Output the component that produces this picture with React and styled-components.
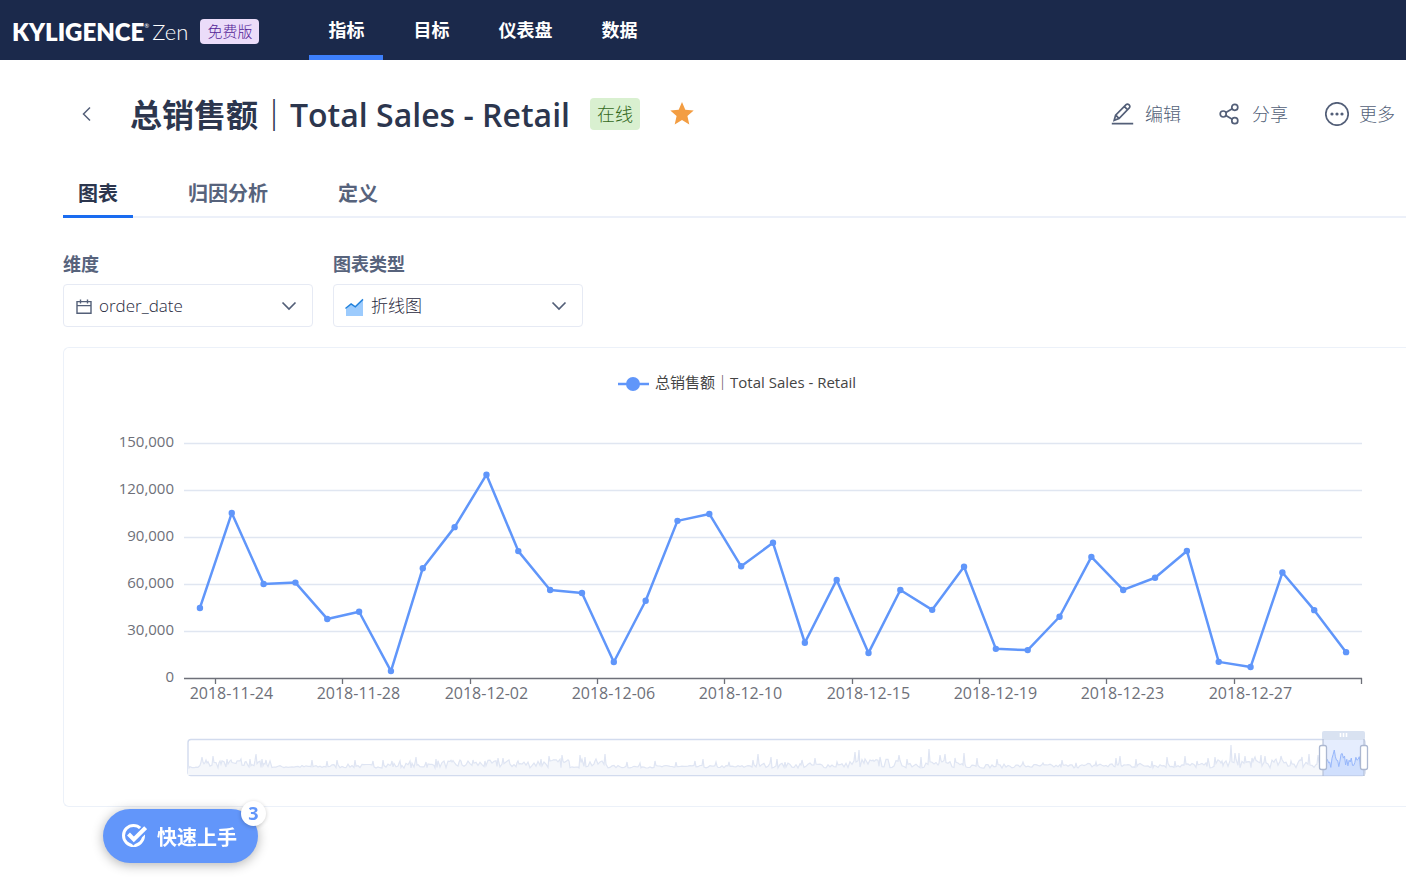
import React, { useLayoutEffect, useRef, useState } from 'react'
import styled, { createGlobalStyle } from 'styled-components'

const METRIC = '总销售额｜Total Sales - Retail';

const navItems = ['指标', '目标', '仪表盘', '数据'];
const tabItems = ['图表', '归因分析', '定义'];

const sales = [
  44700, 105300, 60000, 60900, 37700, 42300, 4400, 70100, 96300, 129800,
  81000, 56200, 54300, 10200, 49300, 100300, 104700, 71300, 86300, 22500,
  62600, 16000, 56200, 43500, 71000, 18600, 17800, 39100, 77300, 56200,
  64000, 81100, 10300, 7000, 67300, 43300, 16500
];

const dateLabels = [
  '2018-11-24', '2018-11-28', '2018-12-02', '2018-12-06', '2018-12-10',
  '2018-12-15', '2018-12-19', '2018-12-23', '2018-12-27'
];

const yLabels = [150000, 120000, 90000, 60000, 30000, 0];

// [day, height] of the busy days in the whole history
const peaks = [
  [0, 5], [14, 11], [18, 8], [25, 12], [32, 7], [39, 9], [43, 8], [49, 7], [53, 9], [57, 6], [62, 9], [68, 14],
  [74, 9], [78, 8], [124, 8], [139, 7], [149, 8], [167, 8], [185, 7], [195, 8], [204, 7],
  [212, 7], [222, 7], [228, 11], [238, 6], [248, 9], [264, 6], [272, 8], [285, 8], [297, 7],
  [310, 10], [315, 10], [321, 8], [330, 7], [353, 9], [361, 12], [367, 8], [374, 13],
  [381, 7], [392, 13], [397, 11], [407, 7], [417, 14], [439, 6], [452, 5], [467, 7], [488, 6],
  [507, 7], [515, 9], [528, 6], [541, 6], [565, 8], [570, 14], [583, 11], [589, 9],
  [597, 6], [614, 8], [627, 10], [649, 6], [667, 16], [671, 18], [677, 9], [685, 8], [692, 11],
  [711, 13], [719, 9], [733, 11], [741, 19], [752, 13], [757, 14], [767, 10], [776, 15],
  [789, 10], [809, 9], [835, 6], [855, 5], [874, 8], [888, 5], [908, 6], [928, 10], [932, 12],
  [948, 9], [964, 7], [979, 11], [987, 7], [997, 12], [1009, 7], [1020, 10], [1027, 11],
  [1034, 7], [1043, 23], [1047, 15], [1051, 15], [1057, 12], [1064, 10], [1067, 11],
  [1073, 13], [1077, 12], [1087, 8], [1093, 12], [1103, 7], [1112, 8], [1114, 11],
  [1121, 14], [1130, 13]
];

// [from day, usual height]
const levels = [
  [0, 1], [12, 6], [85, 2], [140, 3], [200, 4], [250, 6], [345, 7], [420, 2],
  [560, 4], [660, 7], [705, 6], [790, 3], [900, 4], [1030, 7]
];

const DAYS = 1177;
const SELECTED_FROM = 1136;

const buildHistory = () => {
  let seed = 7;
  const random = () => {
    seed = (seed * 16807) % 2147483647;
    return seed / 2147483647;
  }
  const peakMap = new Map(peaks);
  const history = [];

  for (let day = 0; day < SELECTED_FROM; day++) {
    const level = levels.filter(([from]) => from <= day).pop()[1];
    if (peakMap.has(day))
      history.push([day, peakMap.get(day)]);
    else if (day % 2 === 0 || peakMap.has(day + 1) || peakMap.has(day - 1))
      history.push([day, random() * level * 1.3]);
  }
  sales.forEach((value, i) => {
    history.push([SELECTED_FROM + (i * (DAYS - SELECTED_FROM)) / (sales.length - 1), value / 7200]);
  })
  return history;
}

const history = buildHistory();

const SalesChart = () => {
  const wrapRef = useRef(null);
  const [width, setWidth] = useState(1342);

  useLayoutEffect(() => {
    const update = () => setWidth(wrapRef.current.clientWidth);
    const observer = new ResizeObserver(update);
    update();
    observer.observe(wrapRef.current);
    return () => observer.disconnect();
  }, [])

  const left = 120;
  const right = width - 44;
  const bottom = 330;
  const band = (right - left) / sales.length;
  const yOf = (value) => bottom - (value / 150000) * 235;
  const points = sales.map((value, i) => [left + band * (i + 0.5), yOf(value)]);
  const middle = (left + right) / 2;

  const sliderLeft = left + 4;
  const sliderRight = right + 3;
  const sliderX = (day) => sliderLeft + (day / DAYS) * (sliderRight - sliderLeft);
  const toLine = (list) => list.map(([day, h]) => `${sliderX(day).toFixed(1)},${(420 - h).toFixed(1)}`).join(' ');
  const picked = history.filter(([day]) => day >= SELECTED_FROM);
  const from = sliderX(SELECTED_FROM) - 1;
  const to = sliderRight - 1;

  return (
    <ChartWrap ref={wrapRef}>
      <ChartSvg role="img" aria-label={METRIC}>
        <g>
          <line x1={middle - 155} x2={middle - 124} y1="36" y2="36" stroke="#6096fa" strokeWidth="2.5" />
          <circle cx={middle - 140} cy="36" r="7" fill="#6096fa" />
          <LegendText x={middle - 118} y="40">{METRIC}</LegendText>
        </g>

        {yLabels.map(value => (
          <g key={value}>
            {value > 0 && <line x1={left} x2={right} y1={Math.round(yOf(value)) + 0.5} y2={Math.round(yOf(value)) + 0.5} stroke="#e0e6f1" strokeWidth="1.3" />}
            <AxisText x={left - 10} y={yOf(value) + 4} textAnchor="end">{value.toLocaleString('en-US')}</AxisText>
          </g>
        ))}

        <path d={`M${left} ${bottom + 0.5}H${right}`} stroke="#6e7079" strokeWidth="1.3" />
        {[...dateLabels, ''].map((label, i) => {
          const x = Math.round(left + band * (1 + i * 4)) - 0.5;
          return (
            <g key={i}>
              <line x1={x} x2={x} y1={bottom} y2={bottom + 6} stroke="#6e7079" strokeWidth="1.3" />
              <DateText x={x + band / 2} y={bottom + 21} textAnchor="middle">{label}</DateText>
            </g>
          )
        })}

        <polyline points={points.map(p => p.join(',')).join(' ')} fill="none" stroke="#6096fa" strokeWidth="2.5" strokeLinejoin="bevel" />
        {points.map(([x, y]) => <circle key={x} cx={x} cy={y} r="3.2" fill="#6096fa" />)}

        <rect x={sliderLeft} y="391.5" width={sliderRight - sliderLeft} height="36" rx="3" fill="#fff" stroke="#d2dbee" strokeWidth="1.4" />
        <polygon points={`${sliderX(0)},427 ${toLine(history)} ${sliderRight},427`} fill="#f5f7fb" />
        <polyline points={toLine(history)} fill="none" stroke="#dfe5f3" strokeWidth="1.2" />
        <rect x={from} y="391" width={to - from} height="37" fill="#e5edfe" />
        <polygon points={`${from},428 ${toLine(picked)} ${to},428`} fill="#d0dffd" />
        <polyline points={toLine(picked)} fill="none" stroke="#97b7fb" />
        <path d={`M${from} 391.5H${to}M${from} 427.5H${to}`} stroke="#c3d1ee" />
        <rect x={from - 1} y="383" width={to - from + 2} height="9" rx="2" fill="#d9e2f1" />
        <path d={`M${(from + to) / 2 - 3} 385v4m3 -4v4m3 -4v4`} stroke="#fff" strokeWidth="1.6" />
        {[from, to].map(x => (
          <g key={x}>
            <line x1={x} x2={x} y1="391" y2="428" stroke="#acb8d1" />
            <rect x={x - 3.5} y="397.5" width="7" height="24" rx="2" fill="#fff" stroke="#acb8d1" strokeWidth="1.3" />
          </g>
        ))}
      </ChartSvg>
    </ChartWrap>
  )
}

const EditIcon = () => (
  <Icon viewBox="0 0 24 24" $size={24}>
    <path d="M3.2 18.3l1.4-5.1L15.1 2.7a1.9 1.9 0 0 1 2.7 0l.5.5a1.9 1.9 0 0 1 0 2.7L8 16.5 3.2 18.3zM4.8 13.2l3.1 3.1M13.5 4.6l3.2 3.2M.8 21.6h21.4" />
  </Icon>
)

const ShareIcon = () => (
  <Icon viewBox="0 0 24 24" $size={24}>
    <circle cx="5.2" cy="12" r="3" />
    <circle cx="16.8" cy="5.3" r="3" />
    <circle cx="16.8" cy="18.7" r="3" />
    <path d="M7.9 10.6l6.3-3.8M7.9 13.4l6.3 3.8" />
  </Icon>
)

const MoreIcon = () => (
  <Icon viewBox="0 0 24 24" $size={24}>
    <circle cx="12" cy="12" r="11.2" />
    <g fill="currentColor" stroke="none">
      <circle cx="7" cy="12" r="1.6" />
      <circle cx="12" cy="12" r="1.6" />
      <circle cx="17" cy="12" r="1.6" />
    </g>
  </Icon>
)

const CalendarIcon = () => (
  <Icon viewBox="0 0 18 18" $size={18}>
    <path d="M2 4.6h14v11.7H2zM2 8.6h14M5.5 2.6v4M12.5 2.6v4" strokeWidth="1.4" />
  </Icon>
)

const AreaIcon = () => (
  <Icon viewBox="0 0 20 20" $size={20}>
    <path d="M1 13L6.5 8l4 3 7.5-6.5V20H1z" fill="#9ccbfd" stroke="none" />
    <path d="M.5 12.5l5.6-4.6 4.2 3L18 3.4" stroke="#1f80dc" strokeWidth="1.5" />
  </Icon>
)

const ChevronIcon = () => (
  <Icon viewBox="0 0 18 18" $size={18}>
    <path d="M2.5 5.5L9 12l6.5-6.5" />
  </Icon>
)

const CheckIcon = () => (
  <Icon viewBox="0 0 26 26" $size={26}>
    <circle cx="12.5" cy="12.5" r="10" stroke="#fff" strokeWidth="3" />
    <path d="M7.5 12l5 5L24.5 5.5" stroke="#6296fa" strokeWidth="8" />
    <path d="M7.5 11l5.3 5.5L24.6 4.7" stroke="#fff" strokeWidth="4" />
  </Icon>
)

const App = () => {
  const [tab, setTab] = useState('图表');

  return (
    <>
      <GlobalStyle />
      <Header>
        <Logo href="#">
          <b>KYLIGENCE</b>
          <sup>®</sup>
          <span>Zen</span>
        </Logo>
        <Plan>免费版</Plan>
        <Nav>
          {navItems.map((item, i) => (
            <NavLink key={item} href="#" className={i === 0 ? 'active' : ''}>{item}</NavLink>
          ))}
        </Nav>
      </Header>

      <Main>
        <TitleRow>
          <BackButton type="button" aria-label="返回">
            <Icon viewBox="0 0 16 16" $size={16}>
              <path d="M11 1.5L4.5 8l6.5 6.5" strokeWidth="1.5" />
            </Icon>
          </BackButton>
          <Title>{METRIC}</Title>
          <Status>在线</Status>
          <StarButton type="button" aria-label="收藏">
            <Icon viewBox="0 0 24 24" $size={24}>
              <path d="M12 0l3.3 7.7 8.4.8-6.3 5.5 1.9 8.4L12 18l-7.3 4.4L6.6 14 .3 8.500l8.4-.8z" fill="#f39d42" stroke="none" />
            </Icon>
          </StarButton>
          <Actions>
            <ActionButton type="button"><EditIcon />编辑</ActionButton>
            <ActionButton type="button"><ShareIcon />分享</ActionButton>
            <ActionButton type="button"><MoreIcon />更多</ActionButton>
          </Actions>
        </TitleRow>

        <Tabs role="tablist">
          {tabItems.map(item => (
            <Tab
              key={item}
              type="button"
              role="tab"
              aria-selected={tab === item}
              $active={tab === item}
              onClick={() => setTab(item)}>
              {item}
            </Tab>
          ))}
        </Tabs>

        <Filters>
          <div>
            <FilterLabel htmlFor="dimension">维度</FilterLabel>
            <SelectBox>
              <CalendarIcon />
              <Select id="dimension">
                <option>order_date</option>
              </Select>
              <ChevronIcon />
            </SelectBox>
          </div>
          <div>
            <FilterLabel htmlFor="chartType">图表类型</FilterLabel>
            <SelectBox>
              <AreaIcon />
              <Select id="chartType">
                <option>折线图</option>
              </Select>
              <ChevronIcon />
            </SelectBox>
          </div>
        </Filters>

        <SalesChart />
      </Main>

      <GuideButton type="button">
        <CheckIcon />
        快速上手
        <GuideCount>3</GuideCount>
      </GuideButton>
    </>
  )
}

export default App;

const GlobalStyle = createGlobalStyle`
  * {
    box-sizing: border-box;
  }

  body {
    margin: 0;
    background-color: #fff;
    color: #2c364e;
    font-family: "Open Sans", "Noto Sans CJK SC", sans-serif;
  }

  button, select {
    font-family: inherit;
  }

  button {
    padding: 0;
    border: none;
    background: none;
    cursor: pointer;
  }
`;

const Icon = styled.svg`
  width: ${props => props.$size}px;
  height: ${props => props.$size}px;
  flex: none;
  fill: none;
  stroke: currentColor;
  stroke-width: 1.7;
`;

const Header = styled.header`
  display: flex;
  align-items: center;
  height: 60px;
  padding: 0 12px;
  background-color: #1b294b;
`;

const Logo = styled.a`
  display: flex;
  align-items: center;
  padding-top: 4px;
  color: #fff;
  font-family: Lato, sans-serif;
  font-size: 24px;
  line-height: 32px;
  text-decoration: none;

  b {
    font-weight: 800;
  }

  sup {
    align-self: flex-start;
    font-size: 6px;
    line-height: 20px;
  }

  span {
    margin-left: 3px;
    font-size: 22px;
    font-weight: 300;
  }
`;

const Plan = styled.span`
  margin-left: 12px;
  padding: 0 7px;
  border-radius: 4px;
  background-color: #ebdcf9;
  color: #531d96;
  font-size: 15px;
  font-weight: 300;
  line-height: 25px;
  margin-top: 3px;
`;

const Nav = styled.nav`
  display: flex;
  gap: 11px;
  margin-left: 50px;
`;

const NavLink = styled.a`
  padding: 6px 19px 0;
  border-bottom: 5px solid transparent;
  color: #fff;
  font-size: 18px;
  font-weight: 700;
  line-height: 49px;
  text-decoration: none;

  &.active {
    border-color: #3d7ffb;
  }
`;

const Main = styled.main`
  padding-left: 63px;
`;

const TitleRow = styled.div`
  display: flex;
  align-items: center;
  height: 108px;
`;

const BackButton = styled.button`
  display: flex;
  justify-content: center;
  width: 48px;
  color: #535f78;
`;

const Title = styled.h1`
  margin: 0 0 0 19px;
  padding-top: 2px;
  font-size: 32px;
  font-weight: 600;
  line-height: 48px;
  white-space: nowrap;
`;

const Status = styled.span`
  margin-left: 20px;
  padding: 0 7px;
  border-radius: 4px;
  background-color: #d9f0d0;
  color: #33691c;
  font-size: 18px;
  font-weight: 300;
  line-height: 32px;
  white-space: nowrap;
`;

const StarButton = styled.button`
  display: flex;
  margin-left: 30px;
`;

const Actions = styled.div`
  display: flex;
  gap: 37px;
  margin-left: auto;
  padding-right: 11px;
`;

const ActionButton = styled.button`
  display: flex;
  align-items: center;
  gap: 10px;
  color: #535f78;
  font-size: 18px;
  font-weight: 300;
  line-height: 26px;
  white-space: nowrap;
`;

const Tabs = styled.div`
  display: flex;
  gap: 40px;
  box-shadow: inset 0 -2px #ecf0f9;
`;

const Tab = styled.button`
  padding: 5px 15px 0;
  border-bottom: 3px solid ${props => props.$active ? '#1a6cf0' : 'transparent'};
  color: ${props => props.$active ? '#2c364e' : '#57637c'};
  font-size: 20px;
  font-weight: 700;
  line-height: 42px;
`;

const Filters = styled.div`
  display: flex;
  gap: 20px;
  margin-top: 32px;
`;

const FilterLabel = styled.label`
  display: block;
  margin-bottom: 6px;
  color: #57637c;
  font-size: 18px;
  font-weight: 700;
  line-height: 28px;
`;

const SelectBox = styled.div`
  display: flex;
  align-items: center;
  gap: 6px;
  width: 250px;
  height: 43px;
  padding: 0 14px 0 11px;
  border: 1px solid #e6eaf4;
  border-radius: 4px;
  color: #535f78;
`;

const Select = styled.select`
  flex: 1;
  min-width: 0;
  padding: 0;
  border: none;
  background: none;
  color: #1f283d;
  font-size: 17px;
  font-weight: 300;
  line-height: 28px;
  appearance: none;
  outline: none;
`;

const ChartWrap = styled.section`
  margin-top: 20px;
  border: 1px solid #ecf1f9;
  border-right: none;
  border-radius: 6px 0 0 6px;
`;

const ChartSvg = styled.svg`
  display: block;
  width: 100%;
  height: 458px;
`;

const LegendText = styled.text`
  fill: #444;
  font-size: 15px;
`;

const AxisText = styled.text`
  fill: #6e7079;
  font-size: 15px;
`;

const DateText = styled(AxisText)`
  font-size: 16px;
`;

const GuideButton = styled.button`
  position: fixed;
  left: 103px;
  bottom: 22px;
  display: flex;
  align-items: center;
  gap: 10px;
  height: 54px;
  padding: 0 21px 0 18px;
  border-radius: 27px;
  background-color: #6296fa;
  box-shadow: 0 2px 12px rgba(0, 0, 0, .3);
  color: #fff;
  font-size: 20px;
  font-weight: 700;
`;

const GuideCount = styled.span`
  position: absolute;
  top: -8px;
  right: -8px;
  width: 25px;
  border-radius: 50%;
  background-color: #fff;
  box-shadow: 0 1px 4px rgba(0, 0, 0, .2);
  color: #6296fa;
  font-size: 18px;
  line-height: 25px;
`;
